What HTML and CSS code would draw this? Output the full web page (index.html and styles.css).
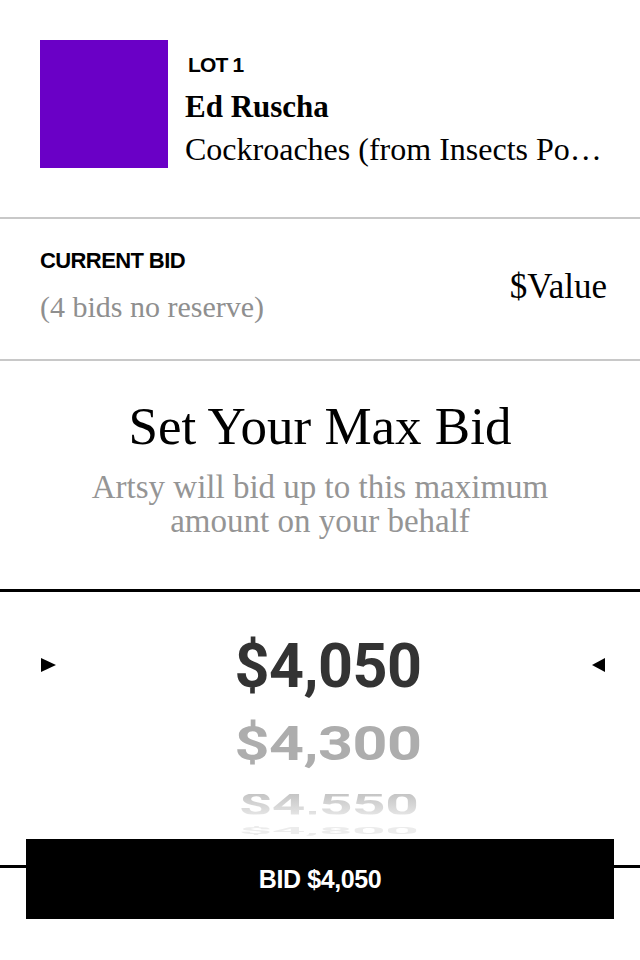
FILE: index.html
```html
<!DOCTYPE html>
<html lang="en">
<head>
<meta charset="utf-8">
<title>Set Your Max Bid</title>
<link rel="stylesheet" href="styles.css">
</head>
<body>
<main class="screen">
  <section class="lot">
    <div class="thumb"></div>
    <div class="lot-info">
      <div class="lot-number">LOT 1</div>
      <div class="artist">Ed Ruscha</div>
      <div class="title">Cockroaches (from Insects Portfolio)</div>
    </div>
  </section>

  <section class="current">
    <div class="current-left">
      <div class="label">CURRENT BID</div>
      <div class="reserve">(4 bids no reserve)</div>
    </div>
    <div class="value">$Value</div>
  </section>

  <section class="heading">
    <h1 class="heading-title">Set Your Max Bid</h1>
    <p class="heading-sub">Artsy will bid up to this maximum<br>amount on your behalf</p>
  </section>

  <section class="picker">
    <span class="arrow arrow-right"></span>
    <div class="wheel">
      <div class="wheel-row row-1"><span>$4,050</span></div>
      <div class="wheel-row row-2"><span>$4,300</span></div>
      <div class="wheel-row row-3"><span>$4,550</span></div>
      <div class="wheel-row row-4"><span>$4,800</span></div>
    </div>
    <span class="arrow arrow-left"></span>
  </section>

  <button class="bid-button" type="button">BID $4,050</button>
</main>
</body>
</html>
```

FILE: styles.css
```css
html, body {
  margin: 0;
  padding: 0;
  background: #fff;
}

body {
  width: 640px;
  height: 960px;
  overflow: hidden;
  font-family: "Liberation Serif", "Times New Roman", serif;
  color: #000;
}

.screen {
  display: flex;
  flex-direction: column;
}

/* Lot header */
.lot {
  display: flex;
  gap: 17px;
  padding: 40px 33px 48px 40px;
  border-bottom: 2px solid #c8c8c8;
}

.thumb {
  flex: 0 0 128px;
  width: 128px;
  height: 128px;
  background: #6a00c6;
}

.lot-info {
  flex: 1;
  min-width: 0;
  margin-top: 13px;
  display: flex;
  flex-direction: column;
}

.lot-number {
  font-family: "Liberation Sans", Arial, sans-serif;
  font-weight: 700;
  font-size: 21px;
  line-height: 24px;
  letter-spacing: -0.8px;
  padding-left: 3px;
}

.artist {
  margin-top: 10px;
  font-weight: 700;
  font-size: 31px;
  line-height: 40px;
}

.title {
  margin-top: 2px;
  font-size: 32px;
  line-height: 40px;
  white-space: nowrap;
  overflow: hidden;
  text-overflow: ellipsis;
}

/* Current bid */
.current {
  display: flex;
  justify-content: space-between;
  align-items: flex-start;
  padding: 29px 33px 32px 40px;
  border-bottom: 2px solid #c8c8c8;
}

.current-left {
  display: flex;
  flex-direction: column;
}

.label {
  font-family: "Liberation Sans", Arial, sans-serif;
  font-weight: 700;
  font-size: 22px;
  line-height: 26px;
  letter-spacing: -0.6px;
}

.reserve {
  margin-top: 13px;
  font-size: 30px;
  line-height: 40px;
  color: #8f8f8f;
}

.value {
  margin-top: 19px;
  font-size: 35px;
  line-height: 40px;
}

/* Heading */
.heading {
  padding: 35px 20px 51px;
  text-align: center;
  border-bottom: 3px solid #000;
}

.heading-title {
  margin: 0;
  font-weight: 400;
  font-size: 53px;
  line-height: 60px;
}

.heading-sub {
  margin: 14px 0 0;
  font-size: 33px;
  line-height: 34px;
  color: #959595;
}

/* Picker */
.picker {
  height: 276px;
  box-sizing: border-box;
  display: flex;
  align-items: flex-start;
  padding: 34px 35px 0 41px;
  border-bottom: 3px solid #000;
  overflow: hidden;
}

.arrow {
  flex: 0 0 auto;
  width: 0;
  height: 0;
  margin-top: 32px;
  border-top: 7px solid transparent;
  border-bottom: 7px solid transparent;
}

.arrow-right {
  border-left: 15px solid #000;
}

.arrow-left {
  border-right: 13px solid #000;
}

.wheel {
  flex: 1;
  display: flex;
  flex-direction: column;
  align-items: center;
  padding-left: 8px;
  font-family: Roboto, "Liberation Sans", sans-serif;
  font-weight: 700;
  font-size: 61px;
  letter-spacing: -0.5px;
}

.wheel-row {
  display: flex;
  align-items: center;
  justify-content: center;
  white-space: nowrap;
}

.wheel-row span {
  display: block;
}

.row-1 {
  height: 80px;
  line-height: 80px;
  color: #333;
}

.row-2 {
  height: 77px;
  line-height: 77px;
  color: #adadad;
}

.row-2 span {
  transform: scaleY(0.78);
}

.row-3 {
  height: 42px;
  line-height: 42px;
}

.row-3 span {
  transform: scale(0.96, 0.5);
  background: linear-gradient(#c4c4c4, #e4e4e4);
  -webkit-background-clip: text;
  background-clip: text;
  color: transparent;
}

.row-4 {
  height: 12px;
  line-height: 12px;
  color: #ececec;
}

.row-4 span {
  transform: scale(0.96, 0.16);
}

/* Bid button */
.bid-button {
  margin: -29px 26px 0;
  height: 80px;
  border: 0;
  background: #000;
  color: #fff;
  font-family: "Liberation Sans", Arial, sans-serif;
  font-weight: 700;
  font-size: 25px;
  letter-spacing: -0.4px;
  position: relative;
}
```
